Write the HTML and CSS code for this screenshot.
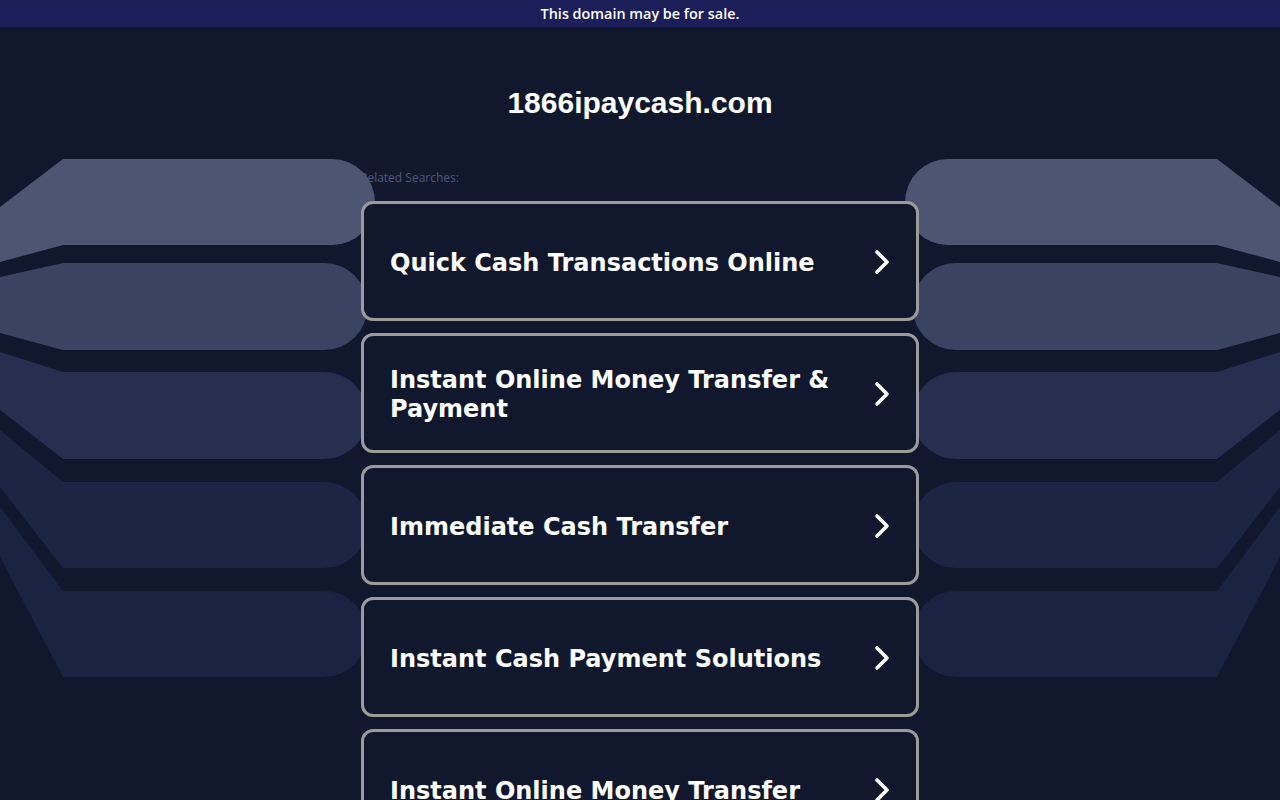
FILE: index.html
```html
<!DOCTYPE html>
<html lang="en">
<head>
<meta charset="utf-8">
<title>1866ipaycash.com</title>
<link rel="stylesheet" href="styles.css">
</head>
<body>
<div class="sale-bar">This domain may be for sale.</div>
<svg class="bg-art" width="1280" height="800" viewBox="0 0 1280 800" aria-hidden="true">
  <g class="left">
    <path fill="#4c5572" d="M0,207 L63,159 L332,159 A43,43 0 0 1 332,245 L63,245 L0,262 Z"/>
    <path fill="#3a4361" d="M0,277 L63,263 L324,263 A43.5,43.5 0 0 1 324,350 L63,350 L0,333 Z"/>
    <path fill="#262f4f" d="M0,352 L63,372 L324,372 A43.5,43.5 0 0 1 324,459 L63,459 L0,410 Z"/>
    <path fill="#1d2545" d="M0,430 L63,482 L324,482 A43,43 0 0 1 324,568 L63,568 L0,487 Z"/>
    <path fill="#1b2342" d="M0,507 L63,591 L324,591 A43,43 0 0 1 324,677 L63,677 L0,557 Z"/>
  </g>
  <g class="right" transform="translate(1280,0) scale(-1,1)">
    <path fill="#4c5572" d="M0,207 L63,159 L332,159 A43,43 0 0 1 332,245 L63,245 L0,262 Z"/>
    <path fill="#3a4361" d="M0,277 L63,263 L324,263 A43.5,43.5 0 0 1 324,350 L63,350 L0,333 Z"/>
    <path fill="#262f4f" d="M0,352 L63,372 L324,372 A43.5,43.5 0 0 1 324,459 L63,459 L0,410 Z"/>
    <path fill="#1d2545" d="M0,430 L63,482 L324,482 A43,43 0 0 1 324,568 L63,568 L0,487 Z"/>
    <path fill="#1b2342" d="M0,507 L63,591 L324,591 A43,43 0 0 1 324,677 L63,677 L0,557 Z"/>
  </g>
</svg>
<main class="content">
  <h1 class="domain">1866ipaycash.com</h1>
  <div class="related">
    <p class="related-label">Related Searches:</p>
    <ul class="links">
      <li><a class="link-card" href="#"><span class="link-text">Quick Cash Transactions Online</span><svg class="chev" viewBox="0 0 20 28"><path d="M5,4 L15,14 L5,24"/></svg></a></li>
      <li><a class="link-card" href="#"><span class="link-text">Instant Online Money Transfer &amp; Payment</span><svg class="chev" viewBox="0 0 20 28"><path d="M5,4 L15,14 L5,24"/></svg></a></li>
      <li><a class="link-card" href="#"><span class="link-text">Immediate Cash Transfer</span><svg class="chev" viewBox="0 0 20 28"><path d="M5,4 L15,14 L5,24"/></svg></a></li>
      <li><a class="link-card" href="#"><span class="link-text">Instant Cash Payment Solutions</span><svg class="chev" viewBox="0 0 20 28"><path d="M5,4 L15,14 L5,24"/></svg></a></li>
      <li><a class="link-card" href="#"><span class="link-text">Instant Online Money Transfer</span><svg class="chev" viewBox="0 0 20 28"><path d="M5,4 L15,14 L5,24"/></svg></a></li>
    </ul>
  </div>
</main>
</body>
</html>
```
FILE: styles.css
```css
html, body {
  margin: 0;
  padding: 0;
  background: #11172c;
  color: #ffffff;
  overflow: hidden;
  height: 100%;
}
body {
  position: relative;
  font-family: "DejaVu Sans", Verdana, sans-serif;
}
.sale-bar {
  height: 27px;
  line-height: 27px;
  background: #1b1e58;
  text-align: center;
  font-family: "Open Sans", "DejaVu Sans", sans-serif;
  font-weight: 600;
  font-size: 14.4px;
  color: #ffffff;
}
.bg-art {
  position: absolute;
  left: 0;
  top: 0;
  z-index: 0;
}
.content {
  display: flex;
  flex-direction: column;
  align-items: center;
}
.domain {
  position: relative;
  z-index: 1;
  margin: 58px 0 0;
  font-family: "Liberation Sans", Arial, sans-serif;
  font-weight: 700;
  font-size: 30px;
  line-height: 36px;
  color: #ffffff;
}
.related {
  width: 558px;
  margin-top: 49px;
}
.related-label {
  margin: 0 0 15px -1px;
  font-family: "Open Sans", "DejaVu Sans", sans-serif;
  font-size: 12px;
  line-height: 16px;
  color: #4f5a7c;
}
.links {
  position: relative;
  z-index: 1;
  list-style: none;
  margin: 0;
  padding: 0;
  display: flex;
  flex-direction: column;
  gap: 12px;
}
.link-card {
  box-sizing: border-box;
  height: 120px;
  display: flex;
  align-items: center;
  justify-content: space-between;
  padding: 4px 24px 0 26px;
  border: 3px solid #9b9b9b;
  border-radius: 12px;
  background: #11172c;
  color: #ffffff;
  text-decoration: none;
}
.link-text {
  font-family: "DejaVu Sans", Verdana, sans-serif;
  font-weight: 700;
  font-size: 24px;
  line-height: 29px;
  max-width: 460px;
}
.chev {
  width: 20px;
  height: 28px;
  flex: none;
  margin-top: -2px;
}
.chev path {
  fill: none;
  stroke: #ffffff;
  stroke-width: 3.6;
  stroke-linecap: round;
  stroke-linejoin: round;
}
```
